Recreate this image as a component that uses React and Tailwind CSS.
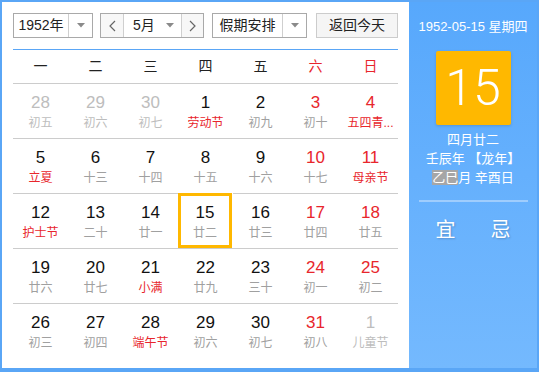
import React from 'react';

const FONT = { fontFamily: '"Liberation Sans", "Noto Sans CJK SC", sans-serif' };

// type: o = other month, h = holiday/solar term (red lunar), w = weekend
const weeks = [
    [
        { d: 28, l: '初五', o: true },
        { d: 29, l: '初六', o: true },
        { d: 30, l: '初七', o: true },
        { d: 1, l: '劳动节', h: true },
        { d: 2, l: '初九' },
        { d: 3, l: '初十', w: true },
        { d: 4, l: '五四青...', w: true, h: true },
    ],
    [
        { d: 5, l: '立夏', h: true },
        { d: 6, l: '十三' },
        { d: 7, l: '十四' },
        { d: 8, l: '十五' },
        { d: 9, l: '十六' },
        { d: 10, l: '十七', w: true },
        { d: 11, l: '母亲节', w: true, h: true },
    ],
    [
        { d: 12, l: '护士节', h: true },
        { d: 13, l: '二十' },
        { d: 14, l: '廿一' },
        { d: 15, l: '廿二', sel: true },
        { d: 16, l: '廿三' },
        { d: 17, l: '廿四', w: true },
        { d: 18, l: '廿五', w: true },
    ],
    [
        { d: 19, l: '廿六' },
        { d: 20, l: '廿七' },
        { d: 21, l: '小满', h: true },
        { d: 22, l: '廿九' },
        { d: 23, l: '三十' },
        { d: 24, l: '初一', w: true },
        { d: 25, l: '初二', w: true },
    ],
    [
        { d: 26, l: '初三' },
        { d: 27, l: '初四' },
        { d: 28, l: '端午节', h: true },
        { d: 29, l: '初六' },
        { d: 30, l: '初七' },
        { d: 31, l: '初八', w: true },
        { d: 1, l: '儿童节', o: true },
    ],
];

const weekdays = ['一', '二', '三', '四', '五', '六', '日'];

const Caret = () => (
    <svg width="8" height="5" viewBox="0 0 8 5">
        <path d="M0 0 L8 0 L4 4.5 Z" fill="#8a8a8a" />
    </svg>
);

const Chevron = ({ dir }) => (
    <svg width="7" height="12" viewBox="0 0 7 12">
        <path
            d={dir === 'left' ? 'M6 1 L1 6 L6 11' : 'M1 1 L6 6 L1 11'}
            fill="none"
            stroke="#666"
            strokeWidth="1.2"
        />
    </svg>
);

const Select = ({ label, width }) => (
    <div className="flex h-[25px] border border-[#a9a9a9] bg-white">
        <div className={`flex items-center justify-center text-[14px] text-[#222] ${width}`}>{label}</div>
        <div className="flex w-[24px] items-center justify-center border-l border-[#cfcfcf]">
            <Caret />
        </div>
    </div>
);

function DayCell({ day }) {
    let numColor = 'text-[#111]';
    let lunColor = 'text-[#a0a0a0]';
    if (day.w) numColor = 'text-[#e8262c]';
    if (day.h) lunColor = 'text-[#e8262c]';
    if (day.o) {
        numColor = 'text-[#bdbdbd]';
        lunColor = 'text-[#bdbdbd]';
    }
    const box = day.sel
        ? 'border-[3px] border-[#ffb800] pt-[7px] mr-[1px]'
        : 'border-t border-[#cccccc] pt-[9px]';
    return (
        <div className={`flex h-[55px] flex-col items-center ${box}`}>
            <div className={`text-[17px] leading-[20px] ${numColor}`}>{day.d}</div>
            <div className={`mt-[2px] text-[12px] leading-[16px] ${lunColor}`}>{day.l}</div>
        </div>
    );
}

export default function App() {
    return (
        <div className="flex h-[372px] w-[539px] border-2 border-b-4 border-[#5aa6f6] bg-white" style={FONT}>
            <div className="w-[407px] px-[11px] pt-[11px]">
                <div className="flex items-center">
                    <Select label="1952年" width="w-[54px]" />
                    <div className="ml-[7px] flex h-[25px] border border-[#a9a9a9] bg-white">
                        <div className="flex w-[22px] items-center justify-center bg-[#f7f7f7]">
                            <Chevron dir="left" />
                        </div>
                        <div className="flex w-[59px] items-center border-x border-[#cfcfcf] pl-[9px] text-[14px] text-[#222]">
                            <span>5月</span>
                            <span className="ml-auto mr-[7px] flex">
                                <Caret />
                            </span>
                        </div>
                        <div className="flex w-[21px] items-center justify-center bg-[#f7f7f7]">
                            <Chevron dir="right" />
                        </div>
                    </div>
                    <div className="ml-[8px]">
                        <Select label="假期安排" width="w-[69px]" />
                    </div>
                    <div className="ml-[9px] flex h-[25px] w-[82px] items-center justify-center border border-[#cccccc] bg-[#f5f5f5] text-[14px] text-[#222]">
                        返回今天
                    </div>
                </div>
                <div className="mt-[11px] w-[385px] border-t border-[#5aa6f6]" />
                <div className="grid w-[385px] grid-cols-7">
                    {weekdays.map((w, i) => (
                        <div
                            key={w}
                            className={`flex h-[33px] items-center justify-center text-[14px] ${i >= 5 ? 'text-[#e8262c]' : 'text-[#222]'}`}
                        >
                            {w}
                        </div>
                    ))}
                    {weeks.flat().map((day, i) => (
                        <DayCell key={i} day={day} />
                    ))}
                </div>
            </div>
            <div className="flex flex-1 flex-col items-center bg-linear-to-b from-[#57a8fc] to-[#74b9fe] pt-[16px] text-white">
                <div className="text-[13px] leading-[18px]">1952-05-15 星期四</div>
                <div className="mt-[15px] flex h-[74px] w-[75px] items-center justify-center rounded-[2px] bg-[#ffb800] shadow-[0_1px_3px_rgba(0,0,0,0.15)]">
                    <span className="text-[50px] font-light leading-none" style={{ fontFamily: 'Roboto, sans-serif' }}>
                        15
                    </span>
                </div>
                <div className="mt-[5px] flex flex-col items-center text-[13px] leading-[19px]">
                    <div>四月廿二</div>
                    <div>壬辰年 【龙年】</div>
                    <div>
                        <span className="bg-[#a6a6a6]">乙巳</span>月 辛酉日
                    </div>
                </div>
                <div className="mt-[13px] h-[2px] w-[109px] bg-[#9fcdfd]" />
                <div className="mt-[16px] flex gap-[35px] text-[20px] leading-[24px] [text-shadow:1px_1px_2px_rgba(0,0,0,0.2)]">
                    <span>宜</span>
                    <span>忌</span>
                </div>
            </div>
        </div>
    );
}
